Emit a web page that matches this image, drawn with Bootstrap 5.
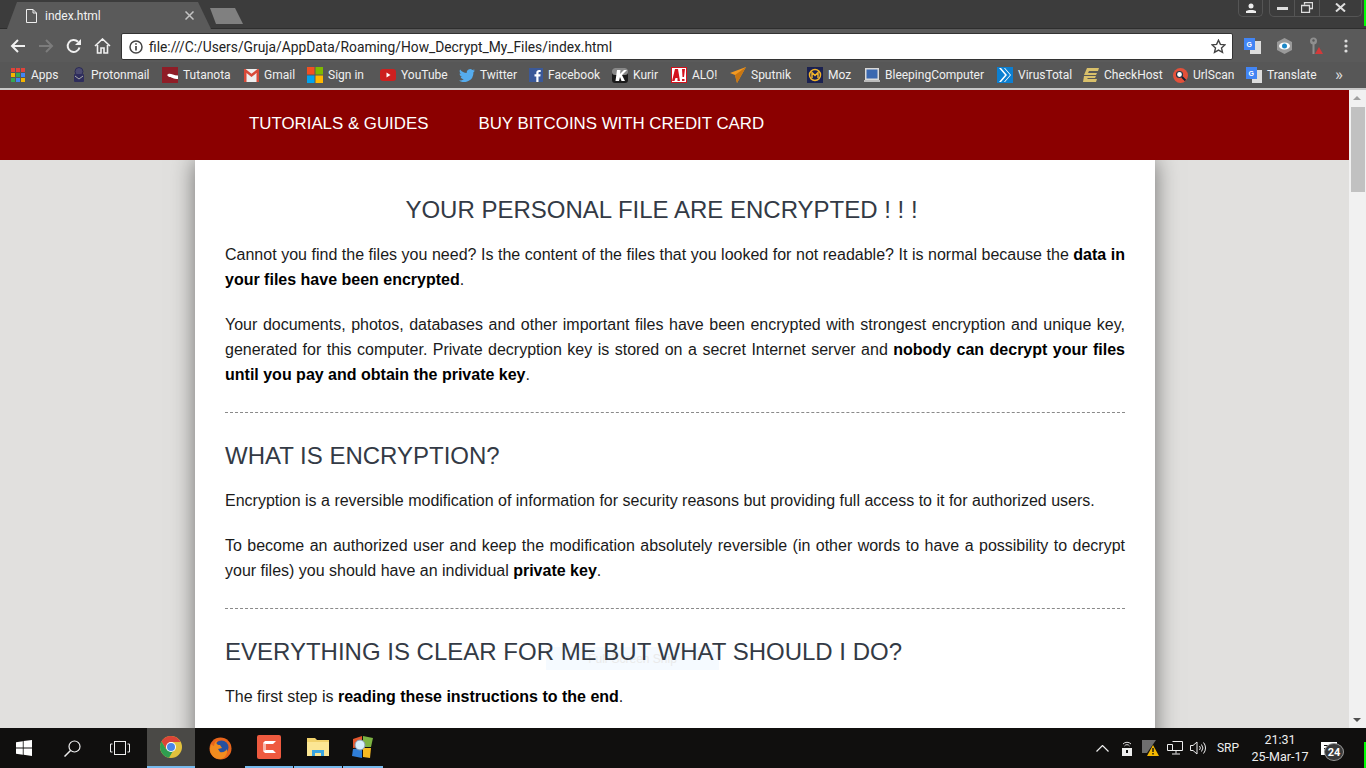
<!DOCTYPE html>
<html lang="en">
<head>
<meta charset="UTF-8">
<title>index.html</title>
<link href="https://cdn.jsdelivr.net/npm/bootstrap@5.3.0/dist/css/bootstrap.min.css" rel="stylesheet">
<style>
html, body { height: 768px; overflow: hidden; }
body { font-family: "Liberation Sans", Arial, sans-serif; background: #e1e0de; }
.screen { width: 1366px; height: 768px; position: relative; overflow: hidden; }

/* browser frame */
.tabstrip { height: 29px; background: #3c3c3c; border-bottom: 1px solid #2e2e2e; padding-left: 7px; }
.tab-shape { width: 204px; height: 27px; margin-top: 2px; background: #5a5a5a; clip-path: polygon(0 100%, 10px 0, 191px 0, 204px 100%); padding: 0 17px 0 19px; color: #f2f2f2; font: 12px Roboto, sans-serif; }
.new-tab { width: 33px; height: 16px; margin: 8px 0 0 -1px; background: #808080; clip-path: polygon(0 0, 25px 0, 33px 100%, 6px 100%); }
.win-group { height: 18px; margin-top: -1px; border: 1px solid #555; border-top: 0; border-radius: 0 0 5px 5px; }
.win-btn { width: 25px; height: 17px; border-right: 1px solid #555; }
.win-btn:last-child { border-right: 0; width: 41px; }
.profile-btn { width: 25px; margin-right: 6px; }
.win-wrap { margin-right: 4px; }
.toolbar { height: 33px; background: #5a5a5a; padding-top: 4px; }
.tool-btn { width: 28px; height: 26px; }
.ext-btn { width: 32px; height: 26px; }
.ext-wrap { margin-left: 3px; }
.omnibox { width: 1112px; height: 27px; background: #fff; border: 1px solid #333; border-radius: 2px; margin-left: 5px; padding: 0 6px 0 7px; font: 13.8px Roboto, sans-serif; color: #222; }
.info-icon { margin-right: 6px; }
.bookmarks { height: 26px; background: #575757; display: grid; grid-template-columns: 61px 90px 82px 63px 73px 79px 70px 83px 59px 59px 77px 57px 133px 86px 90px 73px 88px 20px; padding-left: 11px; color: #f0f0f0; font: 12px Roboto, sans-serif; align-items: center; }
.bm-item { gap: 5px; white-space: nowrap; }
.bm-more { font-size: 17px; line-height: 20px; margin: -3px 0 0 1px; color: #ddd; }
.frame-edge { height: 2px; background: #c8c8c8; }

/* page */
.viewport { height: 638px; position: relative; overflow: hidden; }
.site-nav { height: 70px; background: #8b0000; padding: 0 0 2px 249px; gap: 50px; position: relative; z-index: 2; }
.site-nav a { color: #fff; font-size: 16.85px; text-decoration: none; }
.paper { width: 960px; margin-left: 195px; padding: 33px 30px 0; background: #fff; box-shadow: 0 0 22px rgba(0, 0, 0, .5); height: 700px; position: relative; }
.paper h2 { font-size: 24px; line-height: 34px; margin: 0 0 15px; color: #333a45; font-weight: 400; position: relative; z-index: 4; }
.paper .lead-title { padding-right: 27px; }
.paper p { font-size: 16px; line-height: 25px; margin: 0 0 20px; color: #1a1a1a; text-align: justify; position: relative; z-index: 1; }
.paper b { color: #000; }
.dash-rule { border-top: 1px dashed #8a8a8a; margin: 25px 0 26px; }
.snip-note { position: absolute; left: 351px; top: 487px; width: 173px; height: 23px; background: #f5faff; color: #eaeaea; font-size: 12px; line-height: 25px; text-align: center; z-index: 1; }
.scroll-track { position: absolute; right: 0; top: 0; width: 17px; height: 638px; background: #f1f1f1; z-index: 3; }
.scroll-thumb { position: absolute; left: 2px; top: 17px; width: 14px; height: 85px; background: #c1c1c1; }
.arrow-up, .arrow-down { position: absolute; left: 4px; width: 0; height: 0; border-left: 4px solid transparent; border-right: 4px solid transparent; }
.arrow-up { top: 6px; border-bottom: 4px solid #a0a0a0; }
.arrow-down { bottom: 6px; border-top: 4px solid #505050; }

/* taskbar */
.taskbar { height: 40px; background: #100f0e; color: #eee; font: 12px Roboto, sans-serif; }
.task-slot { height: 40px; flex: 0 0 auto; }
.slot-48 { width: 48px; }
.slot-50 { width: 50px; }
.slot-40 { width: 40px; }
.task-active { background: #4a4946; border-bottom: 2px solid #76b9ed; margin-left: 3px; }
.task-open { border-bottom: 2px solid #76b9ed; margin-right: 1px; }
.tray-wrap { margin-right: 21px; }
.tray-slot { width: 24px; height: 40px; }
.lang-text { margin: 0 4px 0 6px; }
.clock-text { width: 74px; line-height: 17px; text-align: center; font-size: 12.5px; }
.action-box { width: 28px; height: 26px; }
.action-count { left: 7px; top: 8px; width: 20px; height: 18px; background: #3a3a3a; border: 1px solid #999; font-weight: 700; font-size: 11px; color: #fff; }
.green-edge { position: absolute; right: 0; width: 2px; height: 26px; background: #0f0; z-index: 5; }
.green-top { top: 0; }
.green-bottom { bottom: 0; }
</style>
</head>
<body>
<div class="screen">
  <div class="green-edge green-top"></div>
  <div class="green-edge green-bottom"></div>

  <div class="tabstrip d-flex">
    <div class="tab-shape d-flex align-items-center">
      <svg width="11" height="14" viewBox="0 0 11 14" class="me-2 flex-shrink-0"><path d="M.5.5h6.500l3.500 3.500v9.500h-10zM7 .5v3.500h3.500" fill="none" stroke="#eee"/></svg>
      <span class="flex-grow-1">index.html</span>
      <svg width="9" height="9" viewBox="0 0 9 9"><path d="M.5.500l8 8M8.500.500l-8 8" stroke="#c4c4c4" stroke-width="1.500"/></svg>
    </div>
    <div class="new-tab"></div>
    <div class="ms-auto d-flex win-wrap">
      <div class="win-group profile-btn d-flex align-items-center justify-content-center">
        <svg width="10" height="10" viewBox="0 0 10 10"><circle cx="5" cy="3" r="2.500" fill="#eee"/><path d="M0 10V8l3-1h4l3 1v2z" fill="#eee"/></svg>
      </div>
      <div class="win-group d-flex">
        <div class="win-btn d-flex align-items-center justify-content-center"><svg width="11" height="4"><rect width="11" height="3" y="1" fill="#ddd"/></svg></div>
        <div class="win-btn d-flex align-items-center justify-content-center"><svg width="12" height="11" viewBox="0 0 12 11"><path d="M3.500 2.500V.5h8v6h-3M.5 3.500h8v7h-8z" fill="none" stroke="#ddd" stroke-width="1.300"/></svg></div>
        <div class="win-btn d-flex align-items-center justify-content-center"><svg width="11" height="9" viewBox="0 0 11 9"><path d="M1 .5l9 8M10 .5l-9 8" stroke="#ddd" stroke-width="2"/></svg></div>
      </div>
    </div>
  </div>

  <div class="toolbar d-flex">
    <div class="d-flex ms-1">
      <div class="tool-btn d-flex align-items-center justify-content-center"><svg width="16" height="16" viewBox="0 0 16 16"><path d="M15 8H2M8 2L2 8l6 6" fill="none" stroke="#f0f0f0" stroke-width="2"/></svg></div>
      <div class="tool-btn d-flex align-items-center justify-content-center"><svg width="16" height="16" viewBox="0 0 16 16"><path d="M1 8h13M8 2l6 6-6 6" fill="none" stroke="#7c7c7c" stroke-width="2"/></svg></div>
      <div class="tool-btn d-flex align-items-center justify-content-center"><svg width="16" height="16" viewBox="0 0 16 16"><path d="M13.500 9.500A6 6 0 1 1 12 3.800" fill="none" stroke="#f0f0f0" stroke-width="2"/><path d="M15 1v6H9z" fill="#f0f0f0"/></svg></div>
      <div class="tool-btn d-flex align-items-center justify-content-center"><svg width="17" height="16" viewBox="0 0 17 16"><path d="M1 8l7.500-7L16 8M3.500 7v8h3.500v-5h3v5h3.500V7" fill="none" stroke="#f0f0f0" stroke-width="1.600"/></svg></div>
    </div>
    <div class="omnibox d-flex align-items-center">
      <svg width="14" height="14" viewBox="0 0 14 14" class="info-icon flex-shrink-0"><circle cx="7" cy="7" r="6" fill="none" stroke="#444" stroke-width="1.500"/><path d="M7 6v4.500M7 3.200v1.600" stroke="#444" stroke-width="1.700"/></svg>
      <span class="flex-grow-1">file:///C:/Users/Gruja/AppData/Roaming/How_Decrypt_My_Files/index.html</span>
      <svg width="15" height="15" viewBox="0 0 15 15"><path d="M7.500 1.200l1.900 4.200 4.500.5-3.400 3 1 4.500-4-2.300-4 2.300 1-4.500-3.400-3 4.500-.5z" fill="none" stroke="#444" stroke-width="1.400"/></svg>
    </div>
    <div class="d-flex ext-wrap">
      <div class="ext-btn d-flex align-items-center justify-content-center"><svg width="17" height="16" viewBox="0 0 17 16"><rect x="6" y="3" width="11" height="13" fill="#ddd"/><rect width="11" height="12" fill="#4285f4"/><text x="2.500" y="8.500" font-size="7" font-weight="700" fill="#fff" font-family="Liberation Sans">G</text></svg></div>
      <div class="ext-btn d-flex align-items-center justify-content-center"><svg width="17" height="16" viewBox="0 0 17 16"><path d="M8.500 0l7.500 4v8l-7.500 4L1 12V4z" fill="#9a9a9a"/><ellipse cx="8.500" cy="8" rx="5.500" ry="3.500" fill="#fff"/><circle cx="8.500" cy="8" r="2.500" fill="#1e88c7"/></svg></div>
      <div class="ext-btn d-flex align-items-center justify-content-center"><svg width="14" height="18" viewBox="0 0 14 18"><circle cx="4.500" cy="4" r="3.500" fill="#8f8f8f"/><circle cx="4.500" cy="3.500" r="1.200" fill="#5a5a5a"/><rect x="3.500" y="7" width="2" height="10" fill="#8f8f8f"/><path d="M10 10l4 7H6z" fill="#d33a3a"/></svg></div>
      <div class="tool-btn d-flex align-items-center justify-content-center"><svg width="4" height="14" viewBox="0 0 4 14"><circle cx="2" cy="2" r="1.600" fill="#ddd"/><circle cx="2" cy="7" r="1.600" fill="#ddd"/><circle cx="2" cy="12" r="1.600" fill="#ddd"/></svg></div>
    </div>
  </div>

  <div class="bookmarks">
    <div class="bm-item d-flex align-items-center"><svg width="15" height="15" viewBox="0 0 15 15"><g><rect width="4" height="4" fill="#e0433a"/><rect x="5" width="4" height="4" fill="#e0433a"/><rect x="10" width="4" height="4" fill="#e0433a"/><rect y="5" width="4" height="4" fill="#f4b400"/><rect x="5" y="5" width="4" height="4" fill="#34a853"/><rect x="10" y="5" width="4" height="4" fill="#4285f4"/><rect y="10" width="4" height="4" fill="#34a853"/><rect x="5" y="10" width="4" height="4" fill="#4285f4"/><rect x="10" y="10" width="4" height="4" fill="#f4b400"/></g></svg><span>Apps</span></div>
    <div class="bm-item d-flex align-items-center"><svg width="14" height="16" viewBox="0 0 14 16"><circle cx="7" cy="4.500" r="4" fill="#4b4a70" stroke="#2b2a55"/><rect x="2" y="7" width="10" height="8" rx="1" fill="#2e2d5c"/><path d="M3 9l4 3 4-3" fill="none" stroke="#aaa"/></svg><span>Protonmail</span></div>
    <div class="bm-item d-flex align-items-center"><svg width="16" height="16" viewBox="0 0 16 16"><rect width="16" height="16" fill="#8f1d27"/><path d="M5 8c3-3 5 .5 11 .5V12c-5 0-7-2.500-9-2z" fill="#fff"/></svg><span>Tutanota</span></div>
    <div class="bm-item d-flex align-items-center"><svg width="15" height="13" viewBox="0 0 15 13"><rect width="15" height="13" fill="#eee"/><path d="M0 0v13h2.500V4L7.500 8l5-4v9H15V0h-1.500l-6 4.700L1.500 0z" fill="#d84a38"/></svg><span>Gmail</span></div>
    <div class="bm-item d-flex align-items-center"><svg width="16" height="16" viewBox="0 0 16 16"><rect width="7.500" height="7.500" fill="#f25022"/><rect x="8.500" width="7.500" height="7.500" fill="#7fba00"/><rect y="8.500" width="7.500" height="7.500" fill="#00a4ef"/><rect x="8.500" y="8.500" width="7.500" height="7.500" fill="#ffb900"/></svg><span>Sign in</span></div>
    <div class="bm-item d-flex align-items-center"><svg width="16" height="12" viewBox="0 0 16 12"><rect width="16" height="12" rx="3" fill="#cd201f"/><path d="M6.500 3.500l4 2.500-4 2.500z" fill="#fff"/></svg><span>YouTube</span></div>
    <div class="bm-item d-flex align-items-center"><svg width="16" height="13" viewBox="0 0 16 13"><path d="M16 1.600c-.6.300-1.200.4-1.900.5.700-.4 1.200-1 1.400-1.800-.6.400-1.300.6-2.100.8A3.300 3.300 0 0 0 7.800 4.100C5.100 4 2.700 2.700 1.100.6.200 2.100.7 4 2.100 5c-.5 0-1-.2-1.500-.4 0 1.600 1.100 3 2.600 3.300-.5.100-1 .1-1.500 0 .4 1.300 1.600 2.200 3.100 2.300A6.600 6.600 0 0 1 0 11.500 9.300 9.300 0 0 0 14.400 3.200c.6-.4 1.200-1 1.600-1.600z" fill="#55acee"/></svg><span>Twitter</span></div>
    <div class="bm-item d-flex align-items-center"><svg width="14" height="14" viewBox="0 0 14 14"><rect width="14" height="14" fill="#3b5998"/><path d="M9.500 14V8.500h1.800l.3-2.200H9.500V5c0-.6.200-1 1.100-1h1.100V2.100c-.2 0-.9-.1-1.600-.1C8.500 2 7.300 3 7.300 4.800v1.500H5.500v2.200h1.800V14z" fill="#fff"/></svg><span>Facebook</span></div>
    <div class="bm-item d-flex align-items-center"><svg width="16" height="15" viewBox="0 0 16 15"><rect width="16" height="15" rx="3" fill="#1a1a1a"/><rect width="16" height="7" rx="3" fill="#888"/><path d="M5 2h3.500L8 6l4-4h3l-5 5 3 6H9.500L8 9l-1 4H3.500z" fill="#fff"/></svg><span>Kurir</span></div>
    <div class="bm-item d-flex align-items-center"><svg width="16" height="16" viewBox="0 0 16 16"><rect width="16" height="16" fill="#fff"/><path d="M1 14L4 2h3l2 12H6.500V11H4.500l-1 3zM11 2h3l-1 8h-1.500zM11 12h2.500v2H11z" fill="#d3121d"/><rect x=".5" y=".5" width="15" height="15" fill="none" stroke="#d3121d"/></svg><span>ALO!</span></div>
    <div class="bm-item d-flex align-items-center"><svg width="16" height="16" viewBox="0 0 16 16"><path d="M16 0L0 6l5 2 2 8z" fill="#f39a21"/><path d="M16 0L5 8l2 8z" fill="#c87612"/></svg><span>Sputnik</span></div>
    <div class="bm-item d-flex align-items-center"><svg width="16" height="16" viewBox="0 0 16 16"><rect width="16" height="16" fill="#1b2150"/><circle cx="8" cy="8" r="5.500" fill="none" stroke="#f0b32a" stroke-width="1.500"/><path d="M5 11V5.500l3 3 3-3V11" fill="none" stroke="#f0b32a" stroke-width="1.500"/></svg><span>Moz</span></div>
    <div class="bm-item d-flex align-items-center"><svg width="16" height="16" viewBox="0 0 16 16"><rect x="1" y="1" width="14" height="12" fill="#d9d9d9"/><rect x="2.500" y="2.500" width="11" height="9" fill="#3a68b0"/><rect y="13" width="16" height="2" fill="#bbb"/></svg><span>BleepingComputer</span></div>
    <div class="bm-item d-flex align-items-center"><svg width="16" height="16" viewBox="0 0 16 16"><rect width="16" height="16" fill="#0c7fd1"/><path d="M2 1h6l6 7-6 7H2l6-7z" fill="#fff"/><path d="M4 1h3l6 7-6 7H4l6-7z" fill="#0c7fd1"/></svg><span>VirusTotal</span></div>
    <div class="bm-item d-flex align-items-center"><svg width="16" height="14" viewBox="0 0 16 14"><path d="M4 0h12l-1 3H6L5 5h9l-1 2H1zM1 8h12l-1 2H5l-1 1h10l-1 3H0z" fill="#d9c06a"/></svg><span>CheckHost</span></div>
    <div class="bm-item d-flex align-items-center"><svg width="15" height="15" viewBox="0 0 15 15"><circle cx="7.500" cy="7.500" r="7.500" fill="#e4503a"/><circle cx="6.500" cy="6.500" r="3" fill="#fff" stroke="#234" stroke-width="1.200"/><path d="M9 9l3.500 3.500" stroke="#123" stroke-width="1.800"/></svg><span>UrlScan</span></div>
    <div class="bm-item d-flex align-items-center"><svg width="16" height="16" viewBox="0 0 16 16"><rect x="6" y="3" width="10" height="13" fill="#ddd"/><rect width="11" height="12" fill="#4285f4"/><text x="2.500" y="8.500" font-size="7" font-weight="700" fill="#fff" font-family="Liberation Sans">G</text></svg><span>Translate</span></div>
    <div class="bm-more">»</div>
  </div>
  <div class="frame-edge"></div>

  <div class="viewport">
    <nav class="site-nav d-flex align-items-center">
      <a href="#">TUTORIALS &amp; GUIDES</a>
      <a href="#">BUY BITCOINS WITH CREDIT CARD</a>
    </nav>
    <main class="paper">
      <h2 class="text-center lead-title">YOUR PERSONAL FILE ARE ENCRYPTED ! ! !</h2>
      <p>Cannot you find the files you need? Is the content of the files that you looked for not readable? It is normal because the <b>data in your files have been encrypted</b>.</p>
      <p>Your documents, photos, databases and other important files have been encrypted with strongest encryption and unique key, generated for this computer. Private decryption key is stored on a secret Internet server and <b>nobody can decrypt your files until you pay and obtain the private key</b>.</p>
      <div class="dash-rule"></div>
      <h2>WHAT IS ENCRYPTION?</h2>
      <p>Encryption is a reversible modification of information for security reasons but providing full access to it for authorized users.</p>
      <p>To become an authorized user and keep the modification absolutely reversible (in other words to have a possibility to decrypt your files) you should have an individual <b>private key</b>.</p>
      <div class="dash-rule"></div>
      <h2>EVERYTHING IS CLEAR FOR ME BUT WHAT SHOULD I DO?</h2>
      <p>The first step is <b>reading these instructions to the end</b>.</p>
      <div class="snip-note">Full-Screen Snip</div>
    </main>
    <div class="scroll-track">
      <div class="arrow-up"></div>
      <div class="scroll-thumb"></div>
      <div class="arrow-down"></div>
    </div>
  </div>

  <footer class="taskbar d-flex">
    <div class="task-slot slot-48 d-flex align-items-center justify-content-center"><svg width="16" height="16" viewBox="0 0 16 16"><path d="M0 2.300l6.800-1v6.300H0zM7.600 1.100L16 0v7.600H7.600zM0 8.400h6.800v6.300L0 13.700zM7.600 8.400H16V16l-8.400-1.200z" fill="#fff"/></svg></div>
    <div class="task-slot slot-48 d-flex align-items-center justify-content-center"><svg width="17" height="17" viewBox="0 0 17 17"><circle cx="10.500" cy="6.500" r="5.500" fill="none" stroke="#eee" stroke-width="1.200"/><path d="M6.500 10.500L.5 16.500" stroke="#eee" stroke-width="1.500"/></svg></div>
    <div class="task-slot slot-48 d-flex align-items-center justify-content-center"><svg width="20" height="14" viewBox="0 0 20 14"><rect x="4.500" y=".5" width="11" height="13" fill="none" stroke="#eee"/><path d="M2.500 3H.5v8h2M17.500 3h2v8h-2" fill="none" stroke="#eee"/></svg></div>
    <div class="task-slot slot-48 task-active d-flex align-items-center justify-content-center"><svg width="22" height="22" viewBox="0 0 22 22"><circle cx="11" cy="11" r="11" fill="#e2c13c"/><path d="M11 0a11 11 0 0 0-9.500 5.500L6 13l5-7h9.500A11 11 0 0 0 11 0z" fill="#db4437"/><path d="M1.500 5.500A11 11 0 0 0 9 21.800L13 15l-7-2z" fill="#2f9e50"/><circle cx="11" cy="11" r="5" fill="#fff"/><circle cx="11" cy="11" r="4" fill="#4a86e8"/></svg></div>
    <div class="task-slot slot-50 d-flex align-items-center justify-content-center"><svg width="23" height="23" viewBox="0 0 23 23"><circle cx="11.500" cy="11.500" r="11" fill="#e8641b"/><circle cx="12.500" cy="10.500" r="7" fill="#27509f"/><path d="M9 3c-3 3-1 5 2 5l2 3-4 1 2 3c3 1 6-1 7-3 1 4-2 10-7 10-6 0-10-5-10-10 0-2 1-4 2-5 0 1 1 2 2 2 0-3 2-5 4-6z" fill="#f28c1e"/></svg></div>
    <div class="task-slot slot-48 task-open d-flex align-items-center justify-content-center"><svg width="24" height="24" viewBox="0 0 24 24"><rect width="24" height="24" rx="2" fill="#ee5a3f"/><path d="M19 6H8L6 8v8l2 2h11l-3-3H9V9h7z" fill="#fff"/><path d="M6 8l3 1v6l-3 1z" fill="#f7b5a8"/></svg></div>
    <div class="task-slot slot-48 task-open d-flex align-items-center justify-content-center"><svg width="22" height="20" viewBox="0 0 22 20"><path d="M0 1h8l2 2h12v16H0z" fill="#f1d26c"/><rect y="5" width="22" height="14" fill="#fbe694"/><path d="M5 19v-6h12v6h-3v-3H8v3z" fill="#3aa6e2"/></svg></div>
    <div class="task-slot slot-40 task-open d-flex align-items-center justify-content-center"><svg width="24" height="24" viewBox="0 0 24 24"><path d="M2 4l9-3v11l-9 1z" fill="#e4572e"/><path d="M12 1l10 2-2 9-8 0z" fill="#7cb342"/><path d="M2 14l9-1v10l-10-2z" fill="#2f7ed8"/><path d="M12 13h8l-1 10-7-1z" fill="#f5b921"/><circle cx="9" cy="10" r="5" fill="#d6eefc" stroke="#89a" stroke-width="1"/></svg></div>

    <div class="ms-auto d-flex align-items-center tray-wrap">
      <div class="tray-slot d-flex align-items-center justify-content-center"><svg width="13" height="7" viewBox="0 0 13 7"><path d="M.5 6.500l6-6 6 6" fill="none" stroke="#eee" stroke-width="1.200"/></svg></div>
      <div class="tray-slot d-flex align-items-center justify-content-center"><svg width="12" height="15" viewBox="0 0 12 15"><path d="M2 3a5.500 5.500 0 0 1 8 0M3.500 5a3 3 0 0 1 5 0" fill="none" stroke="#ddd"/><rect x="1" y="7" width="10" height="8" fill="#eee"/><rect x="5" y="9" width="2" height="3" fill="#111"/></svg></div>
      <div class="tray-slot d-flex align-items-center justify-content-center"><svg width="17" height="16" viewBox="0 0 17 16"><path d="M0 0h14L5 13H0z" fill="#6e6e6e"/><path d="M11 5l6 11H5z" fill="#f5b800"/><path d="M11 8v4M11 13v1.500" stroke="#111" stroke-width="1.400"/></svg></div>
      <div class="tray-slot d-flex align-items-center justify-content-center"><svg width="16" height="14" viewBox="0 0 16 14"><path d="M5.500.5h10v9H3M.5 3.500h5v6H.5zM9 9.500v3M5 13h8" fill="none" stroke="#eee"/></svg></div>
      <div class="tray-slot d-flex align-items-center justify-content-center"><svg width="17" height="14" viewBox="0 0 17 14"><path d="M.5 4.500h2.500L7 1v12L3 9.500H.5z" fill="none" stroke="#eee"/><path d="M9.500 5a3 3 0 0 1 0 4M11.500 3.500a5.500 5.500 0 0 1 0 7M13.500 1.500a8.500 8.500 0 0 1 0 11" fill="none" stroke="#eee"/></svg></div>
      <div class="lang-text">SRP</div>
      <div class="clock-text"><div>21:31</div><div>25-Mar-17</div></div>
      <div class="action-box position-relative d-flex align-items-center">
        <svg width="16" height="13" viewBox="0 0 16 13" class="ms-1"><rect width="16" height="13" fill="#fff"/><path d="M3 3.500h10M3 6.500h10M3 9.500h10" stroke="#111"/></svg>
        <span class="action-count position-absolute d-flex align-items-center justify-content-center rounded-circle">24</span>
      </div>
    </div>
  </footer>
</div>
<script src="https://cdn.jsdelivr.net/npm/bootstrap@5.3.0/dist/js/bootstrap.bundle.min.js"></script>
</body>
</html>
